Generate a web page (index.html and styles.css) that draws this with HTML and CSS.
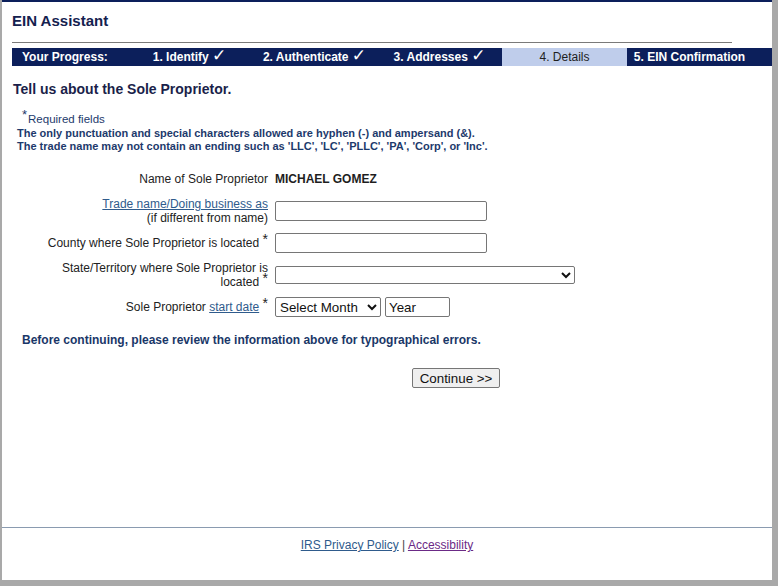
FILE: index.html
```html
<!DOCTYPE html>
<html lang="en">
  <head>
    <meta charset="UTF-8" />
    <meta name="viewport" content="width=device-width, initial-scale=1.0" />
    <title>EIN Assistant</title>
    <link rel="stylesheet" href="styles.css">
  </head>
  <body>
    <div class="page">
      <div class="header">
        <h1 class="app-title">EIN Assistant</h1>
        <div class="header-rule"></div>
      </div>

      <div class="progress">
        <div class="step step-label">Your Progress:</div>
        <div class="step">1. Identify <span class="check">&#10003;</span></div>
        <div class="step">2. Authenticate <span class="check">&#10003;</span></div>
        <div class="step">3. Addresses <span class="check">&#10003;</span></div>
        <div class="step step-current">4. Details</div>
        <div class="step">5. EIN Confirmation</div>
        <div class="step-fill"></div>
      </div>

      <h2 class="page-title">Tell us about the Sole Proprietor.</h2>

      <div class="notes">
        <div class="required-note"><span class="star">*</span>Required fields</div>
        <div class="rule-note">The only punctuation and special characters allowed are hyphen (-) and ampersand (&amp;).</div>
        <div class="rule-note">The trade name may not contain an ending such as 'LLC', 'LC', 'PLLC', 'PA', 'Corp', or 'Inc'.</div>
      </div>

      <div class="form">
        <div class="label">Name of Sole Proprietor</div>
        <div class="field"><span class="name-value">MICHAEL GOMEZ</span></div>

        <div class="label"><a href="#" class="link">Trade name/Doing business as</a><br>(if different from name)</div>
        <div class="field"><input type="text" class="input input-wide"></div>

        <div class="label">County where Sole Proprietor is located <span class="req">*</span></div>
        <div class="field"><input type="text" class="input input-wide"></div>

        <div class="label">State/Territory where Sole Proprietor is located <span class="req">*</span></div>
        <div class="field">
          <select class="select select-state">
            <option></option>
          </select>
        </div>

        <div class="label">Sole Proprietor <a href="#" class="link">start date</a> <span class="req">*</span></div>
        <div class="field">
          <select class="select select-month">
            <option>Select Month</option>
          </select>
          <input type="text" class="input input-year" value="Year">
        </div>
      </div>

      <p class="review-note">Before continuing, please review the information above for typographical errors.</p>

      <div class="actions">
        <button class="btn">Continue &gt;&gt;</button>
      </div>

      <div class="footer">
        <a href="#" class="link">IRS Privacy Policy</a> | <a href="#" class="link link-visited">Accessibility</a>
      </div>
    </div>
  </body>
</html>
```

FILE: styles.css
```css
* {
  margin: 0;
  padding: 0;
  box-sizing: border-box;
}

body {
  font-family: "Liberation Sans", Arial, sans-serif;
  background: #a9a9a9;
  color: #222;
}

.page {
  margin-left: 2px;
  width: 770px;
  height: 580px;
  background: #fff;
  border-top: 2px solid #0c1f5b;
  display: flex;
  flex-direction: column;
}

.header {
  padding: 10px 0 0 10px;
}

.app-title {
  font-size: 15px;
  line-height: 18px;
  font-weight: bold;
  color: #14214f;
}

.header-rule {
  width: 720px;
  height: 1px;
  background: #7a7a7a;
  margin-top: 12px;
}

.progress {
  display: flex;
  margin: 5px 0 0 10px;
  height: 18px;
  background: #0c1f5b;
  color: #fff;
  font-size: 12px;
  font-weight: bold;
  line-height: 18px;
}

.step {
  width: 125px;
  text-align: center;
  white-space: nowrap;
}

.step-label {
  width: 115px;
  text-align: left;
  padding-left: 10px;
}

.step-current {
  background: #bfcdeb;
  color: #1e1e1e;
  font-weight: normal;
}

.step-fill {
  flex: 1;
}

.check {
  font-family: "DejaVu Sans", sans-serif;
  font-size: 17px;
  font-weight: bold;
  line-height: 0;
}

.page-title {
  font-size: 14px;
  line-height: 17px;
  font-weight: bold;
  color: #1b1f4a;
  margin: 15px 0 0 11px;
}

.notes {
  margin: 13px 0 0 15px;
  color: #1d3a6c;
}

.required-note {
  font-size: 11.5px;
  line-height: 16px;
  padding-left: 5px;
}

.star {
  font-size: 13px;
  vertical-align: 4px;
  margin-right: 1px;
  line-height: 0;
}

.rule-note {
  font-size: 11px;
  font-weight: bold;
  line-height: 13px;
}

.form {
  display: grid;
  grid-template-columns: 226px 1fr;
  grid-auto-rows: 32px;
  column-gap: 7px;
  align-items: center;
  margin: 10px 0 0 40px;
  font-size: 12px;
  line-height: 14px;
}

.label {
  text-align: right;
  color: #222;
}

.req {
  font-size: 14px;
  vertical-align: 3px;
  line-height: 0;
}

.field {
  display: flex;
  align-items: center;
  gap: 4px;
}

.name-value {
  font-weight: bold;
  color: #1e1e1e;
}

.link {
  color: #2f5b8c;
  text-decoration: underline;
}

.link-visited {
  color: #6b2a86;
}

.input {
  height: 20px;
  border: 1px solid #767676;
  border-radius: 2px;
  font-family: "Liberation Sans", Arial, sans-serif;
  font-size: 13.33px;
  padding: 0 3px;
  color: #111;
  background: #fff;
}

.input-wide {
  width: 212px;
}

.input-year {
  width: 65px;
}

.select {
  height: 20px;
  border: 1px solid #767676;
  border-radius: 2px;
  font-family: "Liberation Sans", Arial, sans-serif;
  font-size: 13.33px;
  color: #111;
  background: #fff;
}

.select-state {
  width: 300px;
  height: 18px;
}

.select-month {
  width: 106px;
}

.review-note {
  margin: 10px 0 0 20px;
  font-size: 12px;
  line-height: 14px;
  font-weight: bold;
  color: #1a3768;
}

.actions {
  padding-left: 410px;
  margin-top: 21px;
}

.btn {
  width: 88px;
  height: 20px;
  font-family: "Liberation Sans", Arial, sans-serif;
  font-size: 13.33px;
  color: #111;
  background: #efefef;
  border: 1px solid #767676;
  border-radius: 2px;
  cursor: pointer;
}

.footer {
  margin-top: auto;
  border-top: 1px solid #8a9bb0;
  padding: 10px 0 28px;
  text-align: center;
  font-size: 12px;
  line-height: 14px;
  color: #444;
}
```
